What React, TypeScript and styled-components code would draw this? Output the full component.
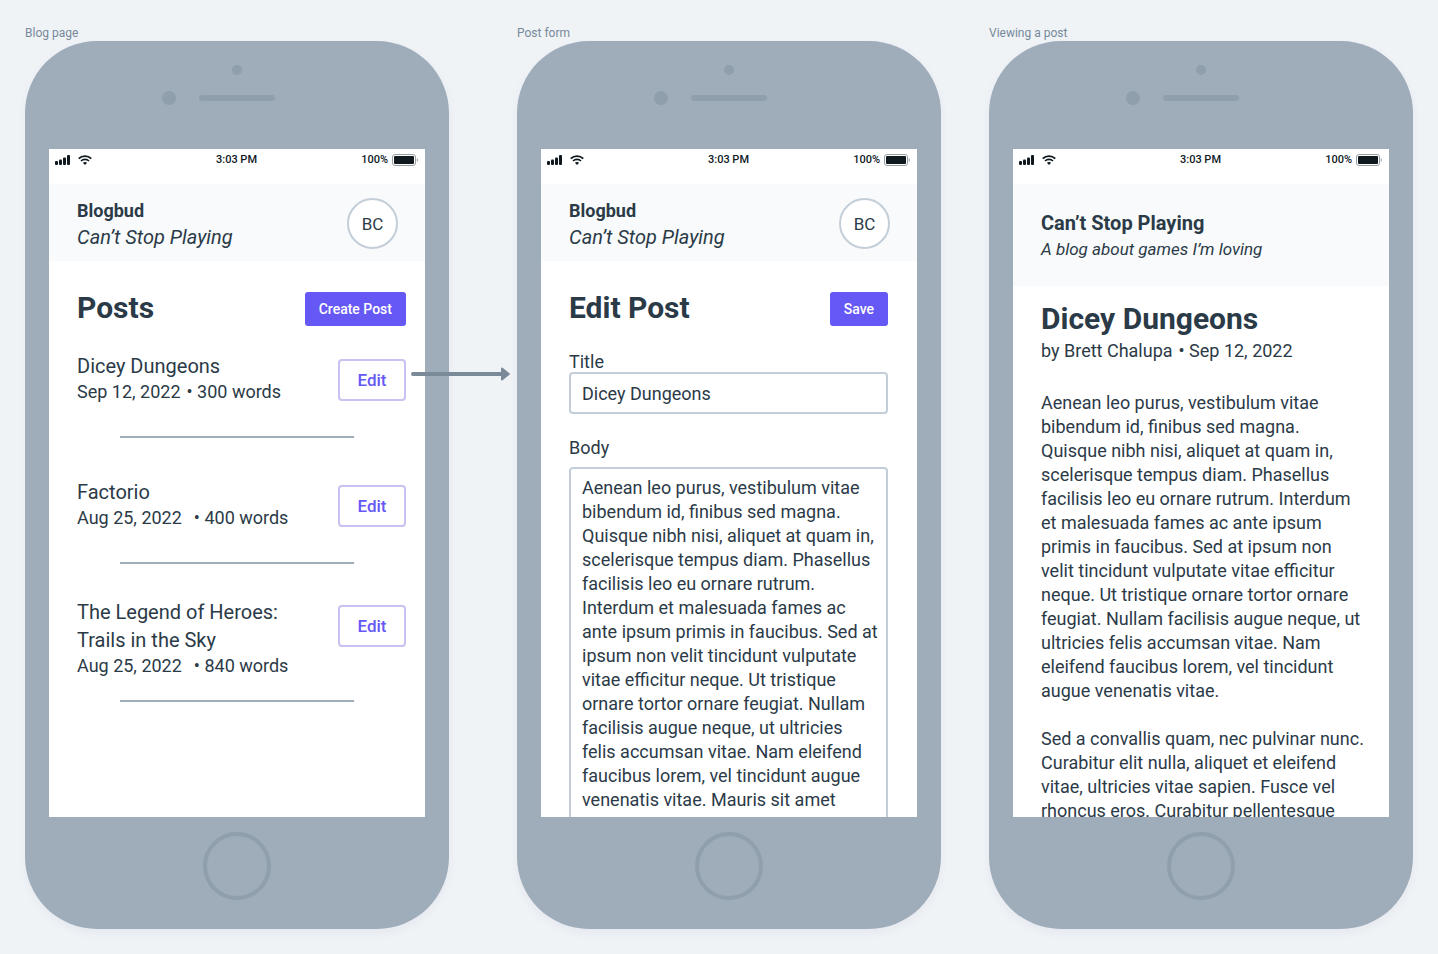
import React from "react";
import styled, { createGlobalStyle } from "styled-components";

const color = {
  canvas: "#eff3f6",
  bezel: "#9facb9",
  bezelDark: "#8f9fac",
  ink: "#2b3a47",
  label: "#77899a",
  panel: "#f8fafc",
  line: "#c4ced8",
  divider: "#9facb9",
  accent: "#6558f5",
  accentSoft: "#c9c1f1",
  status: "#0f191f",
};

const GlobalStyle = createGlobalStyle`
  *, *::before, *::after { box-sizing: border-box; }
  body {
    margin: 0;
    background: ${color.canvas};
    color: ${color.ink};
    font-family: Roboto, "Liberation Sans", sans-serif;
    font-size: 18px;
    line-height: 24px;
  }
  h1, h2, h3, p, ul { margin: 0; padding: 0; }
  button, input, textarea { font: inherit; color: inherit; margin: 0; }
`;

const Board = styled.main`
  display: grid;
  grid-template-columns: minmax(0, 1fr) 68px minmax(0, 1fr) 48px minmax(0, 1fr);
  padding: 25px;
`;

const Frame = styled.section<{ $column: number }>`
  grid-column: ${(p) => p.$column};
  grid-row: 1;
`;

const FrameLabel = styled.h2`
  color: ${color.label};
  font-size: 12px;
  font-weight: 400;
  line-height: 16px;
`;

const Device = styled.div`
  background: ${color.bezel};
  border-radius: 72px;
  padding: 0 24px;
  box-shadow: 0 4px 8px rgba(90, 90, 150, 0.06);
`;

const TopBezel = styled.div`
  display: flex;
  flex-direction: column;
  align-items: center;
  gap: 16px;
  height: 108px;
  padding-top: 24px;
`;

const Dot = styled.span<{ $size: number }>`
  width: ${(p) => p.$size}px;
  height: ${(p) => p.$size}px;
  border-radius: 50%;
  background: ${color.bezelDark};
`;

const SpeakerRow = styled.div`
  display: grid;
  grid-template-columns: 1fr 76px 1fr;
  align-items: center;
  column-gap: 23px;
  width: 100%;
  & > :first-child { justify-self: end; }
`;

const Speaker = styled.span`
  height: 6px;
  border-radius: 3px;
  background: ${color.bezelDark};
`;

const BottomBezel = styled.div`
  display: flex;
  justify-content: center;
  padding: 15px 0 29px;
`;

const HomeButton = styled.span`
  width: 68px;
  height: 68px;
  border: 4px solid ${color.bezelDark};
  border-radius: 50%;
`;

const Screen = styled.div`
  aspect-ratio: 94 / 167;
  overflow: hidden;
  background: #fff;
`;

const StatusBar = styled.div`
  display: grid;
  grid-template-columns: 1fr auto 1fr;
  align-items: center;
  padding: 0 7px 14px 6px;
  color: ${color.status};
  font-size: 11px;
  font-weight: 500;
  line-height: 21px;
`;

const StatusGroup = styled.div<{ $end?: boolean }>`
  display: flex;
  align-items: center;
  gap: ${(p) => (p.$end ? 4 : 7)}px;
  justify-content: ${(p) => (p.$end ? "flex-end" : "flex-start")};
`;

const AppHeader = styled.header<{ $tall?: boolean }>`
  display: flex;
  align-items: center;
  justify-content: space-between;
  height: ${(p) => (p.$tall ? 102 : 77)}px;
  padding: 2px 27px 0 28px;
  background: ${color.panel};
`;

const HeaderTitle = styled.p<{ $large?: boolean }>`
  font-size: ${(p) => (p.$large ? 20 : 18)}px;
  font-weight: 700;
  line-height: 26px;
`;

const HeaderSubtitle = styled.p<{ $large?: boolean }>`
  font-size: ${(p) => (p.$large ? 20 : 17)}px;
  font-style: italic;
  line-height: 26px;
`;

const Avatar = styled.span`
  display: grid;
  place-items: center;
  width: 51px;
  height: 51px;
  border: 2px solid ${color.line};
  border-radius: 50%;
  background: #fff;
  font-size: 17px;
`;

const TitleRow = styled.div`
  display: flex;
  align-items: flex-start;
  justify-content: space-between;
  padding-top: 31px;
`;

const Heading = styled.h1`
  font-size: 30px;
  font-weight: 700;
  line-height: 32px;
`;

const PrimaryButton = styled.button`
  height: 34px;
  padding: 0 14px;
  border: 0;
  border-radius: 3px;
  background: ${color.accent};
  color: #fff;
  font-size: 14px;
  font-weight: 500;
`;

const OutlineButton = styled.button`
  width: 68px;
  height: 42px;
  margin-top: 7px;
  padding: 0;
  border: 2px solid ${color.accentSoft};
  border-radius: 4px;
  background: #fff;
  color: ${color.accent};
  font-size: 17px;
  font-weight: 500;
`;

const PostsBody = styled.div`
  padding: 0 19px 0 28px;
`;

const PostList = styled.ul`
  list-style: none;
  padding-top: 26px;
`;

const PostItem = styled.li`
  & + & { padding-top: 40px; }
  & + &:last-child { padding-top: 34px; }
`;

const PostRow = styled.div`
  display: flex;
  align-items: flex-start;
  justify-content: space-between;
  padding: 0 19px 0 28px;
`;

const PostTitle = styled.h3`
  font-size: 20px;
  font-weight: 400;
  line-height: 28px;
  white-space: pre-line;
`;

const Meta = styled.p<{ $wide?: boolean }>`
  display: flex;
  & > span + span { padding-left: ${(p) => (p.$wide ? 12 : 6)}px; }
`;

const Divider = styled.hr<{ $gap: number }>`
  width: 234px;
  height: 2px;
  margin: ${(p) => p.$gap}px auto 0;
  border: 0;
  background: ${color.divider};
`;

const Form = styled.form`
  display: flex;
  flex-direction: column;
  padding: 0 29px 0 28px;
`;

const Label = styled.label<{ $gapTop: number; $gapBottom: number }>`
  padding: ${(p) => p.$gapTop}px 0 ${(p) => p.$gapBottom}px;
  line-height: 20px;
`;

const TextInput = styled.input`
  width: 100%;
  height: 42px;
  padding: 0 11px;
  border: 2px solid ${color.line};
  border-radius: 4px;
  background: #fff;
`;

const TextBox = styled.textarea`
  width: 100%;
  height: 480px;
  padding: 7px 0 7px 11px;
  border: 2px solid ${color.line};
  border-radius: 4px;
  background: #fff;
  overflow: hidden;
  resize: none;
  white-space: pre;
`;

const Article = styled.article`
  padding: 17px 24px 0 28px;
`;

const Paragraph = styled.p`
  padding-bottom: 24px;
  white-space: pre;
`;

const Byline = styled.div`
  padding: 4px 0 28px;
`;

const Connector = styled.div`
  position: relative;
  grid-column: 2;
  grid-row: 1;
`;

const Arrow = styled.svg`
  position: absolute;
  top: 341px;
  left: -38px;
`;

const BODY_FORM = [
  "Aenean leo purus, vestibulum vitae",
  "bibendum id, finibus sed magna.",
  "Quisque nibh nisi, aliquet at quam in,",
  "scelerisque tempus diam. Phasellus",
  "facilisis leo eu ornare rutrum.",
  "Interdum et malesuada fames ac",
  "ante ipsum primis in faucibus. Sed at",
  "ipsum non velit tincidunt vulputate",
  "vitae efficitur neque. Ut tristique",
  "ornare tortor ornare feugiat. Nullam",
  "facilisis augue neque, ut ultricies",
  "felis accumsan vitae. Nam eleifend",
  "faucibus lorem, vel tincidunt augue",
  "venenatis vitae. Mauris sit amet",
].join("\n");

const BODY_POST = [
  [
    "Aenean leo purus, vestibulum vitae",
    "bibendum id, finibus sed magna.",
    "Quisque nibh nisi, aliquet at quam in,",
    "scelerisque tempus diam. Phasellus",
    "facilisis leo eu ornare rutrum. Interdum",
    "et malesuada fames ac ante ipsum",
    "primis in faucibus. Sed at ipsum non",
    "velit tincidunt vulputate vitae efficitur",
    "neque. Ut tristique ornare tortor ornare",
    "feugiat. Nullam facilisis augue neque, ut",
    "ultricies felis accumsan vitae. Nam",
    "eleifend faucibus lorem, vel tincidunt",
    "augue venenatis vitae.",
  ],
  [
    "Sed a convallis quam, nec pulvinar nunc.",
    "Curabitur elit nulla, aliquet et eleifend",
    "vitae, ultricies vitae sapien. Fusce vel",
    "rhoncus eros. Curabitur pellentesque",
  ],
];

const POSTS = [
  { title: "Dicey Dungeons", date: "Sep 12, 2022", words: 300, wide: false, gap: 32 },
  { title: "Factorio", date: "Aug 25, 2022", words: 400, wide: true, gap: 32 },
  { title: "The Legend of Heroes:\nTrails in the Sky", date: "Aug 25, 2022", words: 840, wide: true, gap: 22 },
];

function SignalIcon() {
  return (
    <svg width="16" height="10" viewBox="0 0 16 10" fill={color.status} aria-hidden="true">
      <rect x="0" y="6" width="3" height="4" rx="1" />
      <rect x="4" y="4.5" width="3" height="5.5" rx="1" />
      <rect x="8" y="2.5" width="3" height="7.5" rx="1" />
      <rect x="12" y="0" width="3" height="10" rx="1" />
    </svg>
  );
}

function WifiIcon() {
  return (
    <svg width="14" height="10" viewBox="0 0 14 10" fill="none" stroke={color.status} aria-hidden="true">
      <path d="M0.7 3.6C4.2 0.2 9.8 0.2 13.3 3.6" strokeWidth="1.8" />
      <path d="M3 6C5.2 3.9 8.8 3.9 11 6" strokeWidth="1.7" />
      <path d="M7 9.9L4.9 7.8C6.1 6.8 7.9 6.8 9.1 7.8Z" fill={color.status} stroke="none" />
    </svg>
  );
}

function BatteryIcon() {
  return (
    <svg width="26" height="12" viewBox="0 0 26 12" aria-hidden="true">
      <rect x="0.5" y="0.5" width="23" height="11" rx="2.5" fill="none" stroke="#9a9fa2" />
      <rect x="2" y="2" width="20" height="8" rx="1" fill={color.status} />
      <path d="M24.800 4v4c1.4-.7 1.4-3.300 0-4z" fill="#9a9fa2" />
    </svg>
  );
}

function Phone({ column, label, children }: { column: number; label: string; children: React.ReactNode }) {
  return (
    <Frame $column={column}>
      <FrameLabel>{label}</FrameLabel>
      <Device>
        <TopBezel>
          <Dot $size={10} />
          <SpeakerRow>
            <Dot $size={14} />
            <Speaker />
          </SpeakerRow>
        </TopBezel>
        <Screen>
          <StatusBar>
            <StatusGroup>
              <SignalIcon />
              <WifiIcon />
            </StatusGroup>
            <span>3:03 PM</span>
            <StatusGroup $end>
              <span>100%</span>
              <BatteryIcon />
            </StatusGroup>
          </StatusBar>
          {children}
        </Screen>
        <BottomBezel>
          <HomeButton />
        </BottomBezel>
      </Device>
    </Frame>
  );
}

function AccountHeader() {
  return (
    <AppHeader>
      <div>
        <HeaderTitle>Blogbud</HeaderTitle>
        <HeaderSubtitle $large>Can’t Stop Playing</HeaderSubtitle>
      </div>
      <Avatar>BC</Avatar>
    </AppHeader>
  );
}

export default function App() {
  return (
    <>
      <GlobalStyle />
      <Board>
        <Phone column={1} label="Blog page">
          <AccountHeader />
          <PostsBody>
            <TitleRow>
              <Heading>Posts</Heading>
              <PrimaryButton type="button">Create Post</PrimaryButton>
            </TitleRow>
          </PostsBody>
          <PostList>
            {POSTS.map((post) => (
              <PostItem key={post.title}>
                <PostRow>
                  <div>
                    <PostTitle>{post.title}</PostTitle>
                    <Meta $wide={post.wide}>
                      <span>{post.date}</span>
                      <span>• {post.words} words</span>
                    </Meta>
                  </div>
                  <OutlineButton type="button">Edit</OutlineButton>
                </PostRow>
                <Divider $gap={post.gap} />
              </PostItem>
            ))}
          </PostList>
        </Phone>

        <Phone column={3} label="Post form">
          <AccountHeader />
          <Form onSubmit={(e) => e.preventDefault()}>
            <TitleRow>
              <Heading>Edit Post</Heading>
              <PrimaryButton type="submit">Save</PrimaryButton>
            </TitleRow>
            <Label htmlFor="post-title" $gapTop={26} $gapBottom={0}>Title</Label>
            <TextInput id="post-title" type="text" defaultValue="Dicey Dungeons" />
            <Label htmlFor="post-body" $gapTop={24} $gapBottom={9}>Body</Label>
            <TextBox id="post-body" defaultValue={BODY_FORM} />
          </Form>
        </Phone>

        <Phone column={5} label="Viewing a post">
          <AppHeader $tall>
            <div>
              <HeaderTitle $large>Can’t Stop Playing</HeaderTitle>
              <HeaderSubtitle>A blog about games I’m loving</HeaderSubtitle>
            </div>
          </AppHeader>
          <Article>
            <Heading>Dicey Dungeons</Heading>
            <Byline>
              <Meta>
                <span>by Brett Chalupa</span>
                <span>• Sep 12, 2022</span>
              </Meta>
            </Byline>
            {BODY_POST.map((lines) => (
              <Paragraph key={lines[0]}>{lines.join("\n")}</Paragraph>
            ))}
          </Article>
        </Phone>

        <Connector>
          <Arrow width="100" height="16" viewBox="0 0 100 16" aria-hidden="true">
            <path d="M2 8H91" stroke="#7b8a99" strokeWidth="4" strokeLinecap="round" />
            <path d="M91 2.500L97.800 8L91 13.500Z" fill="#7b8a99" stroke="#7b8a99" strokeWidth="2" strokeLinejoin="round" />
          </Arrow>
        </Connector>
      </Board>
    </>
  );
}
